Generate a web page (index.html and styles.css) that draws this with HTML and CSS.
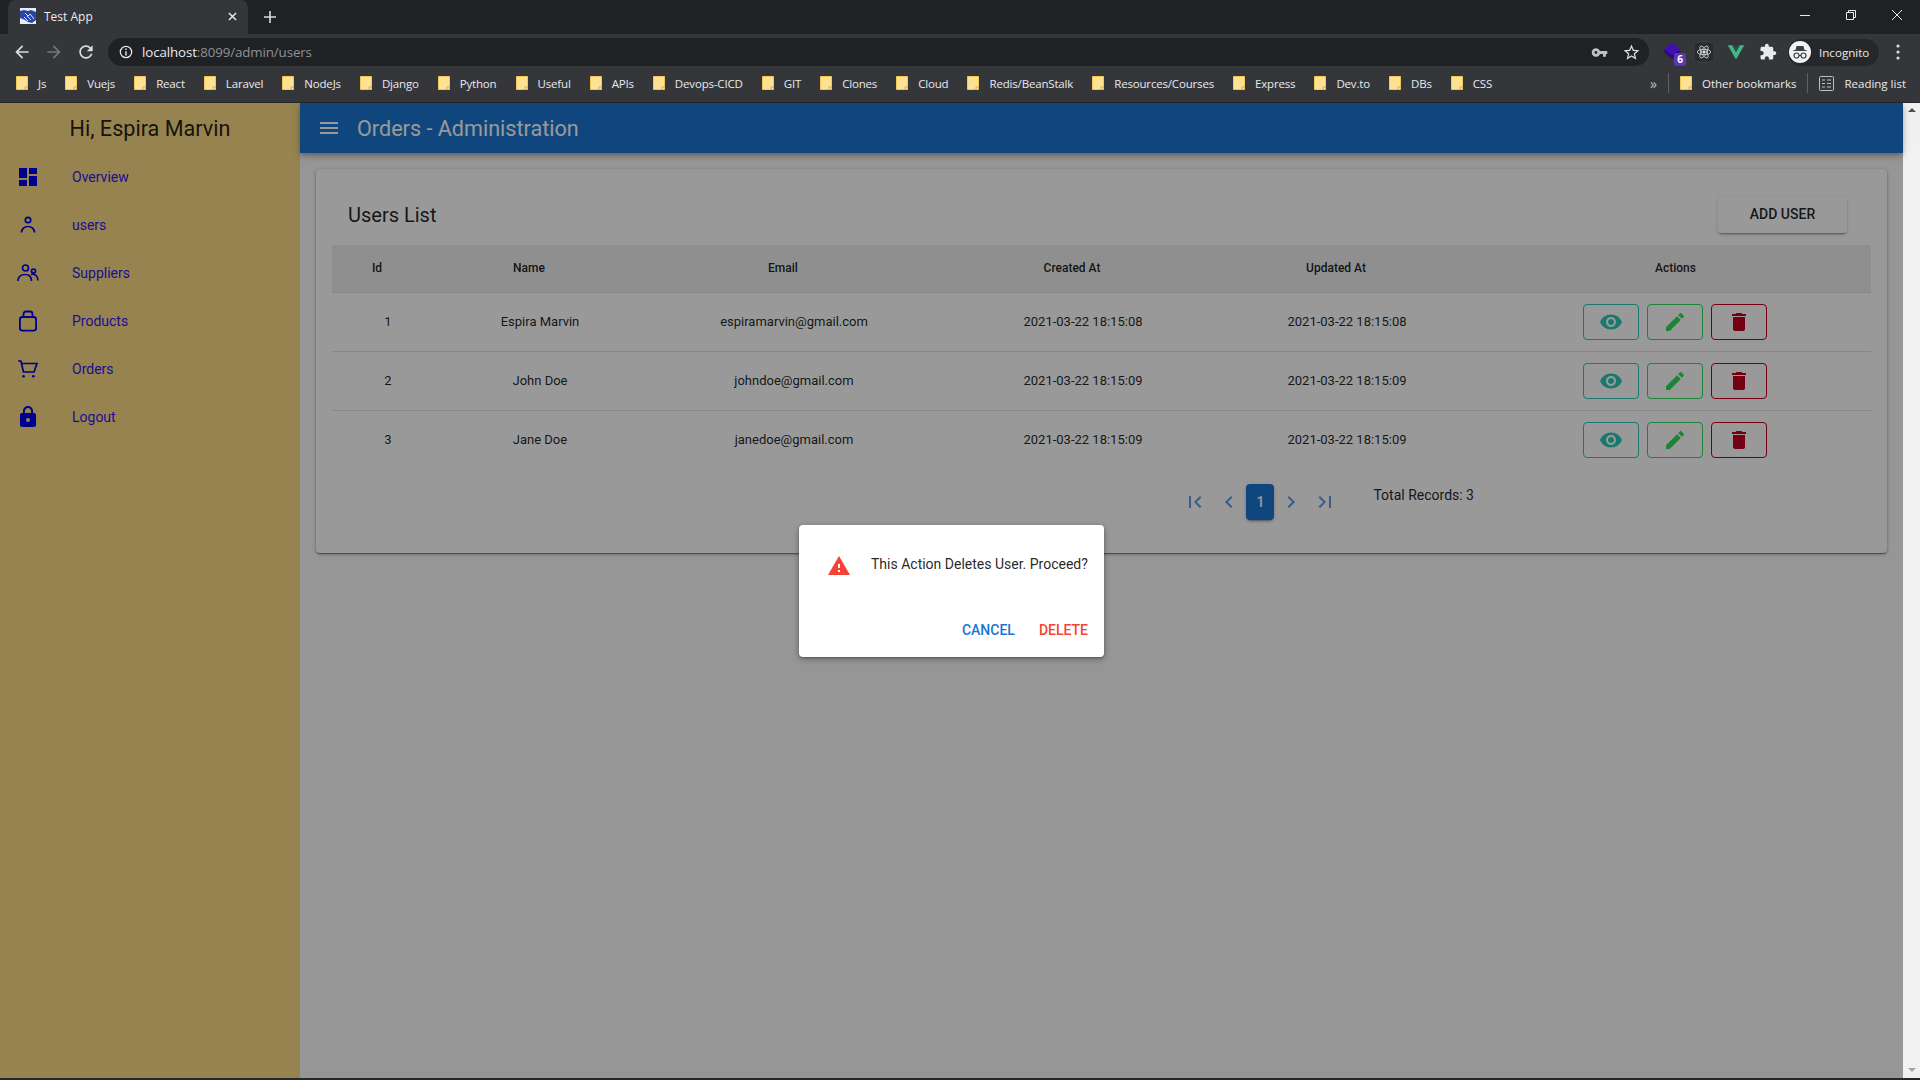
FILE: index.html
```html
<!DOCTYPE html>
<html lang="en">

<head>
    <meta charset="UTF-8">
    <title>Test App</title>
    <link rel="stylesheet" href="styles.css">
</head>

<body>
    <svg class="sprites" width="0" height="0">
        <symbol id="i-eye" viewBox="0 0 24 24"><path d="M12 4.5C7 4.5 2.73 7.61 1 12c1.73 4.39 6 7.5 11 7.5s9.27-3.11 11-7.5c-1.73-4.39-6-7.5-11-7.5zM12 17c-2.76 0-5-2.24-5-5s2.24-5 5-5 5 2.24 5 5-2.24 5-5 5zm0-8c-1.66 0-3 1.34-3 3s1.34 3 3 3 3-1.34 3-3-1.34-3-3-3z"/></symbol>
        <symbol id="i-edit" viewBox="0 0 24 24"><path d="M3 17.25V21h3.75L17.81 9.94l-3.75-3.75L3 17.25zM20.71 7.04c.39-.39.39-1.02 0-1.41l-2.34-2.34c-.39-.39-1.02-.39-1.41 0l-1.83 1.83 3.75 3.75 1.83-1.83z"/></symbol>
        <symbol id="i-trash" viewBox="0 0 24 24"><path d="M6 19c0 1.1.9 2 2 2h8c1.1 0 2-.9 2-2V7H6v12zM19 4h-3.5l-1-1h-5l-1 1H5v2h14V4z"/></symbol>
        <symbol id="i-folder" viewBox="0 0 12 14"><path d="M.5.5h11v13h-11z" fill="#fde293" stroke="#f0c858"/><path d="M9 14v-3h3" fill="none" stroke="#d9ae45"/></symbol>
    </svg>

    <header class="browser">
        <div class="tabstrip">
            <div class="tab">
                <svg class="favicon" viewBox="0 0 16 16"><rect width="16" height="16" fill="#e9edf8"/><path d="M0 3l4-1 4 1 3-1 5 2v8l-4 3-4-1-3-2-5-2z" fill="#2746a8"/><path d="M5 5l3 3 2-2 4 5M4 9l4 4M7 8l4 4" fill="none" stroke="#dfe7fb"/></svg>
                <span class="tab-title">Test App</span>
                <svg class="tab-close" viewBox="0 0 10 10"><path d="M1 1l8 8M9 1l-8 8" stroke="#e8eaed" stroke-width="1.6"/></svg>
            </div>
            <svg class="new-tab" viewBox="0 0 12 12"><path d="M6 0v12M0 6h12" stroke="#dadce0" stroke-width="1.6"/></svg>
            <div class="window-btns">
                <svg viewBox="0 0 12 12"><path d="M1 6.5h10" stroke="#e8eaed"/></svg>
                <svg viewBox="0 0 12 12"><path d="M1.5 3.5h7v7h-7zM3.5 3.5v-2h7v7h-2" fill="none" stroke="#e8eaed"/></svg>
                <svg viewBox="0 0 12 12"><path d="M1 1l10 10M11 1L1 11" stroke="#e8eaed"/></svg>
            </div>
        </div>

        <div class="toolbar">
            <svg class="tool" viewBox="0 0 24 24" fill="#dadce0"><path d="M20 11H7.83l5.59-5.59L12 4l-8 8 8 8 1.41-1.41L7.83 13H20v-2z"/></svg>
            <svg class="tool" viewBox="0 0 24 24" fill="#75777b"><path d="M12 4l-1.41 1.41L16.17 11H4v2h12.17l-5.58 5.59L12 20l8-8z"/></svg>
            <svg class="tool" viewBox="0 0 24 24" fill="#dadce0"><path d="M17.65 6.35C16.2 4.9 14.21 4 12 4c-4.42 0-7.99 3.58-7.99 8s3.57 8 7.99 8c3.73 0 6.84-2.55 7.73-6h-2.08c-.82 2.33-3.04 4-5.65 4-3.31 0-6-2.69-6-6s2.69-6 6-6c1.66 0 3.14.69 4.22 1.78L13 11h7V4l-2.35 2.35z"/></svg>
            <div class="omnibox">
                <svg class="omni-info" viewBox="0 0 16 16"><circle cx="8" cy="8" r="6.5" fill="none" stroke="#e8eaed" stroke-width="1.4"/><path d="M8 7v5M8 4v1.6" stroke="#e8eaed" stroke-width="1.6"/></svg>
                <span class="url">localhost<span class="url-rest">:8099/admin/users</span></span>
                <svg class="omni-key" viewBox="0 0 24 24" fill="#bdc1c6"><path d="M12.65 10C11.83 7.67 9.61 6 7 6c-3.31 0-6 2.69-6 6s2.69 6 6 6c2.61 0 4.83-1.67 5.65-4H17v4h4v-4h2v-4H12.65zM7 14c-1.1 0-2-.9-2-2s.9-2 2-2 2 .9 2 2-.9 2-2 2z"/></svg>
                <svg class="omni-star" viewBox="0 0 24 24" fill="#dadce0"><path d="M22 9.24l-7.19-.62L12 2 9.19 8.63 2 9.24l5.46 4.73L5.82 21 12 17.27 18.18 21l-1.63-7.03L22 9.24zM12 15.4l-3.76 2.27 1-4.28-3.32-2.88 4.38-.38L12 6.1l1.71 4.04 4.38.38-3.32 2.88 1 4.28L12 15.4z"/></svg>
            </div>
            <div class="extensions">
                <div class="ext ext-stack">
                    <svg viewBox="0 0 18 16"><path d="M9 3l8.5 5.500L9 16 .5 8.500z" fill="#28087a"/><path d="M9 0l8.500 6L9 12.500.5 6z" fill="#3f0fb0"/></svg>
                    <span class="ext-badge">6</span>
                </div>
                <svg class="ext" viewBox="0 0 24 24" fill="none" stroke="#e8eaed"><rect width="24" height="24" rx="2" fill="#2a2b2e" stroke="none"/><ellipse cx="12" cy="12" rx="9" ry="3.600"/><ellipse cx="12" cy="12" rx="9" ry="3.600" transform="rotate(60 12 12)"/><ellipse cx="12" cy="12" rx="9" ry="3.600" transform="rotate(120 12 12)"/><circle cx="12" cy="12" r="1.600" fill="#e8eaed"/></svg>
                <svg class="ext" viewBox="0 0 24 24"><path d="M1 3h6l5 9 5-9h6L12 22z" fill="#3fb984"/><path d="M7 3h3.200L12 6l1.800-3H17l-5 9z" fill="#2f4858"/></svg>
                <svg class="ext" viewBox="0 0 24 24" fill="#e8eaed"><path d="M20.5 11H19V7c0-1.1-.9-2-2-2h-4V3.5C13 2.12 11.88 1 10.5 1S8 2.12 8 3.5V5H4c-1.1 0-1.99.9-1.99 2v3.8H3.5c1.49 0 2.7 1.21 2.7 2.7s-1.21 2.7-2.7 2.7H2V20c0 1.1.9 2 2 2h3.8v-1.5c0-1.49 1.21-2.7 2.7-2.7 1.49 0 2.7 1.21 2.7 2.7V22H17c1.1 0 2-.9 2-2v-4h1.5c1.38 0 2.5-1.12 2.5-2.5S21.88 11 20.5 11z"/></svg>
            </div>
            <div class="incognito">
                <svg viewBox="0 0 22 22"><circle cx="11" cy="11" r="11" fill="#f1f3f4"/><path d="M7.500 5h7l1 4h2v1H4.500V9h2z" fill="#3c4043"/><circle cx="7.500" cy="14.500" r="2.500" fill="none" stroke="#3c4043" stroke-width="1.200"/><circle cx="14.500" cy="14.500" r="2.500" fill="none" stroke="#3c4043" stroke-width="1.200"/><path d="M10 14.500h2" stroke="#3c4043"/></svg>
                <span>Incognito</span>
            </div>
            <svg class="menu-dots" viewBox="0 0 4 16" fill="#dadce0"><circle cx="2" cy="2" r="1.600"/><circle cx="2" cy="8" r="1.600"/><circle cx="2" cy="14" r="1.600"/></svg>
        </div>

        <nav class="bookmarks">
            <a class="bookmark"><svg><use href="#i-folder"/></svg>Js</a>
            <a class="bookmark"><svg><use href="#i-folder"/></svg>Vuejs</a>
            <a class="bookmark"><svg><use href="#i-folder"/></svg>React</a>
            <a class="bookmark"><svg><use href="#i-folder"/></svg>Laravel</a>
            <a class="bookmark"><svg><use href="#i-folder"/></svg>NodeJs</a>
            <a class="bookmark"><svg><use href="#i-folder"/></svg>Django</a>
            <a class="bookmark"><svg><use href="#i-folder"/></svg>Python</a>
            <a class="bookmark"><svg><use href="#i-folder"/></svg>Useful</a>
            <a class="bookmark"><svg><use href="#i-folder"/></svg>APIs</a>
            <a class="bookmark"><svg><use href="#i-folder"/></svg>Devops-CICD</a>
            <a class="bookmark"><svg><use href="#i-folder"/></svg>GIT</a>
            <a class="bookmark"><svg><use href="#i-folder"/></svg>Clones</a>
            <a class="bookmark"><svg><use href="#i-folder"/></svg>Cloud</a>
            <a class="bookmark"><svg><use href="#i-folder"/></svg>Redis/BeanStalk</a>
            <a class="bookmark"><svg><use href="#i-folder"/></svg>Resources/Courses</a>
            <a class="bookmark"><svg><use href="#i-folder"/></svg>Express</a>
            <a class="bookmark"><svg><use href="#i-folder"/></svg>Dev.to</a>
            <a class="bookmark"><svg><use href="#i-folder"/></svg>DBs</a>
            <a class="bookmark"><svg><use href="#i-folder"/></svg>CSS</a>
            <div class="bookmarks-end">
                <span class="chevrons">»</span>
                <i class="bm-sep"></i>
                <a class="bookmark"><svg><use href="#i-folder"/></svg>Other bookmarks</a>
                <i class="bm-sep"></i>
                <a class="bookmark reading">
                    <svg viewBox="0 0 15 15"><rect x=".5" y=".5" width="14" height="14" rx="1" fill="none" stroke="#bdc1c6"/><path d="M3 4h3M8 4h4M3 7.500h3M8 7.500h4M3 11h3M8 11h4" stroke="#bdc1c6"/></svg>
                    Reading list
                </a>
            </div>
        </nav>
    </header>

    <div class="viewport">
        <div class="app">
            <aside class="sidebar">
                <h2 class="greeting">Hi, Espira Marvin</h2>
                <ul class="side-nav">
                    <li>
                        <svg viewBox="0 0 24 24" fill="currentColor"><path d="M3 13h8V3H3v10zm0 8h8v-6H3v6zm10 0h8V11h-8v10zm0-18v6h8V3h-8z"/></svg>
                        <a>Overview</a>
                    </li>
                    <li>
                        <svg viewBox="0 0 24 24" fill="none" stroke="currentColor" stroke-width="1.700"><circle cx="12" cy="7" r="2.700"/><path d="M5.500 19.500c0-3.500 3-6 6.500-6s6.500 2.500 6.500 6"/></svg>
                        <a>users</a>
                    </li>
                    <li>
                        <svg viewBox="0 0 24 24" fill="none" stroke="currentColor" stroke-width="1.700"><circle cx="9.500" cy="7" r="3"/><circle cx="17.500" cy="10" r="2"/><path d="M2 20c0-4 3-6.500 7-6.500s6.500 2.500 6.500 6.500M15 13.500c3.500-1 7 1.500 7 6"/></svg>
                        <a>Suppliers</a>
                    </li>
                    <li>
                        <svg viewBox="0 0 24 24" fill="none" stroke="currentColor" stroke-width="1.800"><rect x="3.900" y="8" width="16.200" height="13.600" rx="2.500"/><path d="M7.500 8V5a2.500 2.500 0 0 1 2.500-2.500h4A2.500 2.500 0 0 1 16.500 5v3"/></svg>
                        <a>Products</a>
                    </li>
                    <li>
                        <svg viewBox="0 0 24 24" fill="none" stroke="currentColor" stroke-width="1.700"><path d="M2.300 3.700L5 4.200 7.500 15H18l3-8.500H6"/><circle cx="7.600" cy="19.300" r="1.300" fill="currentColor" stroke="none"/><circle cx="17.300" cy="19.300" r="1.300" fill="currentColor" stroke="none"/></svg>
                        <a>Orders</a>
                    </li>
                    <li>
                        <svg viewBox="0 0 24 24" fill="currentColor"><path d="M18 8h-1V6c0-2.760-2.240-5-5-5S7 3.240 7 6v2H6c-1.100 0-2 .9-2 2v10c0 1.100.9 2 2 2h12c1.100 0 2-.9 2-2V10c0-1.100-.9-2-2-2zm-6 9c-1.100 0-2-.9-2-2s.9-2 2-2 2 .9 2 2-.9 2-2 2zm3.100-9H8.900V6c0-1.710 1.390-3.100 3.100-3.100 1.710 0 3.100 1.390 3.100 3.100v2z"/></svg>
                        <a>Logout</a>
                    </li>
                </ul>
            </aside>

            <main class="main">
                <div class="appbar">
                    <svg viewBox="0 0 24 24" fill="currentColor"><path d="M3 18h18v-2H3v2zm0-5h18v-2H3v2zm0-7v2h18V6H3z"/></svg>
                    <span>Orders - Administration</span>
                </div>

                <section class="card">
                    <div class="card-head">
                        <h3>Users List</h3>
                        <button class="add-btn">ADD USER</button>
                    </div>

                    <table class="users">
                        <colgroup>
                            <col class="c-id">
                            <col class="c-name">
                            <col class="c-email">
                            <col class="c-date">
                            <col class="c-date2">
                            <col>
                        </colgroup>
                        <thead>
                            <tr>
                                <th>Id</th>
                                <th>Name</th>
                                <th>Email</th>
                                <th>Created At</th>
                                <th>Updated At</th>
                                <th class="th-actions">Actions</th>
                            </tr>
                        </thead>
                        <tbody>
                            <tr>
                                <td>1</td>
                                <td>Espira Marvin</td>
                                <td>espiramarvin@gmail.com</td>
                                <td>2021-03-22 18:15:08</td>
                                <td>2021-03-22 18:15:08</td>
                                <td>
                                    <div class="actions">
                                        <button class="act view"><svg><use href="#i-eye"/></svg></button>
                                        <button class="act edit"><svg><use href="#i-edit"/></svg></button>
                                        <button class="act del"><svg><use href="#i-trash"/></svg></button>
                                    </div>
                                </td>
                            </tr>
                            <tr>
                                <td>2</td>
                                <td>John Doe</td>
                                <td>johndoe@gmail.com</td>
                                <td>2021-03-22 18:15:09</td>
                                <td>2021-03-22 18:15:09</td>
                                <td>
                                    <div class="actions">
                                        <button class="act view"><svg><use href="#i-eye"/></svg></button>
                                        <button class="act edit"><svg><use href="#i-edit"/></svg></button>
                                        <button class="act del"><svg><use href="#i-trash"/></svg></button>
                                    </div>
                                </td>
                            </tr>
                            <tr>
                                <td>3</td>
                                <td>Jane Doe</td>
                                <td>janedoe@gmail.com</td>
                                <td>2021-03-22 18:15:09</td>
                                <td>2021-03-22 18:15:09</td>
                                <td>
                                    <div class="actions">
                                        <button class="act view"><svg><use href="#i-eye"/></svg></button>
                                        <button class="act edit"><svg><use href="#i-edit"/></svg></button>
                                        <button class="act del"><svg><use href="#i-trash"/></svg></button>
                                    </div>
                                </td>
                            </tr>
                        </tbody>
                    </table>

                    <div class="pager-row">
                        <div class="pager">
                            <button class="pg"><svg viewBox="0 0 24 24"><path d="M18.410 16.590L13.820 12l4.590-4.590L17 6l-6 6 6 6zM6 6h2v12H6z"/></svg></button>
                            <button class="pg"><svg viewBox="0 0 24 24"><path d="M15.410 7.410L14 6l-6 6 6 6 1.410-1.410L10.830 12z"/></svg></button>
                            <button class="pg-current">1</button>
                            <button class="pg"><svg viewBox="0 0 24 24"><path d="M10 6L8.590 7.410 13.170 12l-4.580 4.590L10 18l6-6z"/></svg></button>
                            <button class="pg"><svg viewBox="0 0 24 24"><path d="M5.590 7.410L10.180 12l-4.590 4.590L7 18l6-6-6-6zM16 6h2v12h-2z"/></svg></button>
                        </div>
                        <span class="total">Total Records: 3</span>
                    </div>
                </section>
            </main>

            <!-- dialog + backdrop sit over the app -->
            <div class="backdrop">
                <div class="dialog">
                    <div class="dialog-msg">
                        <svg viewBox="0 0 24 24" fill="#f44336"><path d="M1 21h22L12 2 1 21zm12-3h-2v-2h2v2zm0-4h-2v-4h2v4z"/></svg>
                        <span>This Action Deletes User. Proceed?</span>
                    </div>
                    <div class="dialog-btns">
                        <button class="txt-btn cancel">CANCEL</button>
                        <button class="txt-btn delete">DELETE</button>
                    </div>
                </div>
            </div>
        </div>

        <div class="scrollbar">
            <i class="arrow-up"></i>
            <i class="arrow-down"></i>
        </div>
    </div>

    <div class="taskbar-edge"></div>
</body>

</html>
```

FILE: styles.css
```css
* {
    box-sizing: border-box;
    margin: 0;
    padding: 0;
}

html,
body {
    height: 100%;
    overflow: hidden;
}

body {
    display: flex;
    flex-direction: column;
    font-family: Roboto, "Liberation Sans", sans-serif;
    background-color: #fafafa;
}

.sprites {
    display: block;
    height: 0;
}

button {
    font-family: inherit;
    background: none;
    border: none;
}

/* browser chrome */

.browser {
    font-family: "Open Sans", "Liberation Sans", sans-serif;
    color: #e8eaed;
    background-color: #35363a;
    height: 103px;
    flex-shrink: 0;
    border-bottom: 1px solid #26272a;
}

.tabstrip {
    display: flex;
    align-items: flex-end;
    height: 34px;
    padding-left: 8px;
    background-color: #202124;
}

.tab {
    display: flex;
    align-items: center;
    width: 240px;
    height: 34px;
    padding: 0 11px 2px 12px;
    background-color: #35363a;
    border-radius: 8px 8px 0 0;
}

.favicon {
    width: 16px;
    height: 16px;
}

.tab-title {
    flex: 1;
    margin-left: 8px;
    font-size: 12px;
}

.tab-close {
    width: 9px;
    height: 9px;
}

.new-tab {
    width: 12px;
    height: 12px;
    margin: 0 0 11px 16px;
}

.window-btns {
    display: flex;
    align-self: flex-start;
    gap: 34px;
    margin: 9px 17px 0 auto;
}

.window-btns svg {
    width: 12px;
    height: 12px;
}

.toolbar {
    display: flex;
    align-items: center;
    height: 32px;
    padding: 4px 0 0 12px;
}

.tool {
    width: 20px;
    height: 20px;
    margin-right: 12px;
}

.omnibox {
    display: flex;
    align-items: center;
    width: 1541px;
    height: 28px;
    padding: 0 8px 0 11px;
    background-color: #202124;
    border-radius: 14px;
}

.omni-info {
    width: 14px;
    height: 14px;
}

.url {
    margin-left: 9px;
    font-size: 13.300px;
    letter-spacing: -.1px;
}

.url-rest {
    color: #8f9296;
}

.omni-key {
    width: 17px;
    height: 17px;
    margin-left: auto;
}

.omni-star {
    width: 19px;
    height: 19px;
    margin-left: 14px;
}

.extensions {
    display: flex;
    align-items: center;
    gap: 14px;
    margin-left: 14px;
}

.ext {
    position: relative;
    display: block;
    width: 18px;
    height: 18px;
}

.ext-stack svg {
    display: block;
    width: 18px;
    height: 16px;
}

.ext-badge {
    position: absolute;
    left: 11px;
    top: 10px;
    width: 12px;
    height: 13px;
    font-size: 10px;
    font-weight: 700;
    line-height: 13px;
    text-align: center;
    color: #fff;
    background-color: #5e35b1;
    border-radius: 2px;
}

.incognito {
    display: flex;
    align-items: center;
    gap: 8px;
    width: 91px;
    height: 27px;
    margin-left: 11px;
    padding-left: 1px;
    font-size: 11.600px;
    background-color: #26272a;
    border-radius: 14px;
}

.incognito svg {
    width: 22px;
    height: 22px;
}

.menu-dots {
    width: 4px;
    height: 16px;
    margin-left: 17px;
}

.bookmarks {
    display: flex;
    align-items: center;
    gap: 19px;
    height: 36px;
    padding: 0 0 2px 16px;
    font-size: 11.500px;
    letter-spacing: -.17px;
}

.bookmark {
    display: flex;
    align-items: center;
    gap: 10px;
    white-space: nowrap;
}

.bookmark svg {
    width: 12px;
    height: 14px;
}

.bookmarks-end {
    display: flex;
    align-items: center;
    gap: 11px;
    margin-left: auto;
    padding-right: 14px;
    letter-spacing: 0;
}

.bookmarks-end .bookmark.reading svg {
    width: 15px;
    height: 15px;
}

.chevrons {
    font-size: 14px;
    color: #bdc1c6;
}

.bm-sep {
    width: 1px;
    height: 20px;
    background-color: #5f6368;
}

/* app */

.viewport {
    flex: 1;
    display: flex;
    min-height: 0;
}

.app {
    position: relative;
    flex: 1;
    display: flex;
}

.sidebar {
    width: 300px;
    flex-shrink: 0;
    background-color: #fada85;
}

.greeting {
    height: 50px;
    font-size: 21.600px;
    font-weight: 400;
    line-height: 52px;
    text-align: center;
    color: rgba(0, 0, 0, .87);
}

.side-nav {
    list-style: none;
}

.side-nav li {
    display: flex;
    align-items: center;
    height: 48px;
    padding-left: 16px;
    color: #0000ee;
    font-size: 14px;
}

.side-nav a {
    color: #3018f0;
}

.side-nav svg {
    width: 24px;
    height: 24px;
    margin-right: 32px;
}

.main {
    flex: 1;
    min-width: 0;
}

.appbar {
    display: flex;
    align-items: center;
    gap: 16px;
    height: 50px;
    padding-left: 17px;
    font-size: 21.600px;
    color: #fff;
    background-color: #1976d2;
    box-shadow: 0 2px 4px -1px rgba(0, 0, 0, .2), 0 4px 5px rgba(0, 0, 0, .14), 0 1px 10px rgba(0, 0, 0, .12);
}

.appbar svg {
    width: 24px;
    height: 24px;
}

.card {
    margin: 16px 16px 0;
    padding: 0 16px 33px;
    background-color: #fff;
    border-radius: 4px;
    box-shadow: 0 2px 1px -1px rgba(0, 0, 0, .3), 0 1px 2px rgba(0, 0, 0, .25), 0 1px 4px rgba(0, 0, 0, .2);
}

.card-head {
    display: flex;
    align-items: center;
    justify-content: space-between;
    padding: 28px 24px 12px 16px;
}

.card-head h3 {
    font-size: 20px;
    font-weight: 400;
    color: rgba(0, 0, 0, .87);
}

.add-btn {
    width: 129px;
    height: 36px;
    padding-bottom: 2px;
    font-size: 14px;
    font-weight: 500;
    color: rgba(0, 0, 0, .87);
    background-color: #ffffff;
    border-radius: 4px;
    box-shadow: 0 3px 1px -2px rgba(0, 0, 0, .2), 0 2px 2px rgba(0, 0, 0, .14), 0 1px 5px rgba(0, 0, 0, .12);
}

.users {
    width: 100%;
    table-layout: fixed;
    border-collapse: collapse;
    color: rgba(0, 0, 0, .87);
}

.c-id {
    width: 112px;
}

.c-name {
    width: 192px;
}

.c-email {
    width: 316px;
}

.c-date {
    width: 262px;
}

.c-date2 {
    width: 266px;
}

.users th {
    height: 47px;
    padding-right: 22px;
    font-size: 12px;
    font-weight: 500;
    background-color: #eeeeee;
    border-bottom: 1px solid rgba(0, 0, 0, .12);
}

.users .th-actions {
    padding-right: 0;
}

.users td {
    height: 59px;
    font-size: 13px;
    text-align: center;
    border-bottom: 1px solid rgba(0, 0, 0, .12);
}

.users tr:last-child td {
    border-bottom: none;
}

.actions {
    display: flex;
    justify-content: center;
    gap: 8px;
    padding-right: 2px;
}

.act {
    display: flex;
    align-items: center;
    justify-content: center;
    width: 56px;
    height: 36px;
    border: 1px solid currentColor;
    border-radius: 4px;
}

.act svg {
    width: 24px;
    height: 24px;
    fill: currentColor;
}

.view {
    color: #2cc9ba;
}

.edit {
    color: #30dc5c;
}

.del {
    color: #c40020;
}

.pager-row {
    display: flex;
    justify-content: flex-end;
    align-items: flex-start;
    gap: 31px;
    margin-top: 15px;
    padding-right: 397px;
}

.pager {
    display: flex;
    align-items: center;
}

.pg {
    display: flex;
    align-items: center;
    justify-content: center;
    width: 34px;
    height: 36px;
}

.pg svg {
    width: 24px;
    height: 24px;
    fill: #1976d2;
    opacity: .7;
}

.pg-current {
    width: 28px;
    height: 36px;
    font-size: 14px;
    font-weight: 500;
    color: #fff;
    background-color: #1976d2;
    border-radius: 4px;
    box-shadow: 0 3px 1px -2px rgba(0, 0, 0, .2), 0 2px 2px rgba(0, 0, 0, .14), 0 1px 5px rgba(0, 0, 0, .12);
}

.total {
    margin-top: 2px;
    font-size: 14px;
    line-height: 18px;
    color: rgba(0, 0, 0, .87);
}

/* dialog */

.backdrop {
    position: absolute;
    inset: 0;
    display: flex;
    align-items: center;
    justify-content: center;
    background-color: rgba(0, 0, 0, .4);
}

.dialog {
    width: 305px;
    height: 132px;
    padding: 27px 16px 0 29px;
    background-color: #fff;
    border-radius: 4px;
    box-shadow: 0 2px 6px rgba(0, 0, 0, .35), 0 1px 2px rgba(0, 0, 0, .2);
}

.dialog-msg {
    display: flex;
    align-items: center;
    gap: 20px;
    font-size: 14px;
    color: rgba(0, 0, 0, .87);
}

.dialog-msg span {
    margin-bottom: 2px;
}

.dialog-msg svg {
    width: 24px;
    height: 24px;
    margin-left: -1px;
    margin-top: 2px;
    flex-shrink: 0;
}

.dialog-btns {
    display: flex;
    justify-content: flex-end;
    gap: 24px;
    margin-top: 44px;
}

.txt-btn {
    font-size: 14px;
    font-weight: 500;
}

.cancel {
    color: #1976d2;
}

.delete {
    color: #f44336;
}

/* scrollbar + bottom edge */

.scrollbar {
    display: flex;
    flex-direction: column;
    justify-content: space-between;
    align-items: center;
    width: 17px;
    padding: 5px 0 6px;
    background-color: #f1f1f1;
}

.arrow-up {
    border: 4px solid transparent;
    border-top: none;
    border-bottom: 4px solid #505050;
}

.arrow-down {
    border: 4px solid transparent;
    border-bottom: none;
    border-top: 4px solid #a3a3a3;
}

.taskbar-edge {
    height: 2px;
    flex-shrink: 0;
    background-color: #26272a;
}
```
